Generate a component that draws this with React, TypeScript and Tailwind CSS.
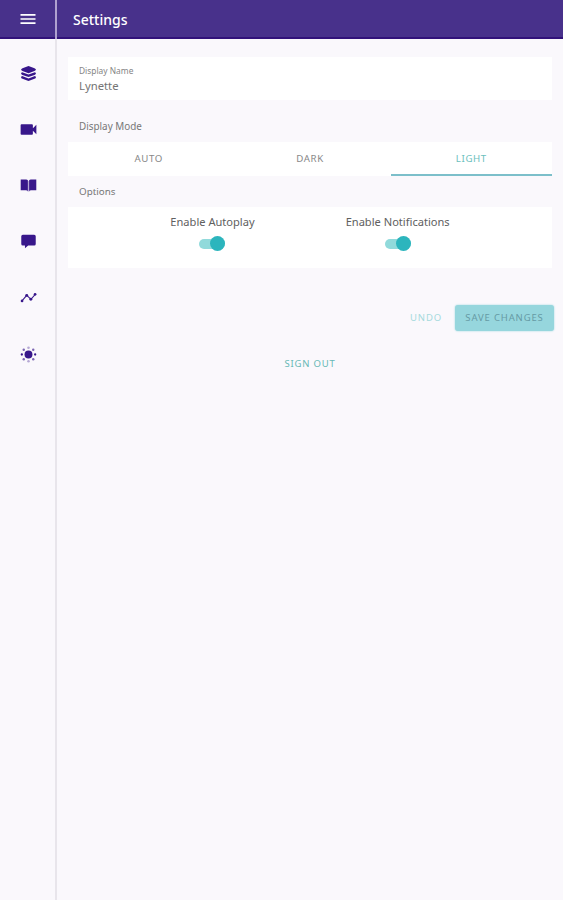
import { useState } from "react";
import type { ReactNode } from "react";
import { MdMenu, MdVideocam } from "react-icons/md";

function Icon({ children }: { children: ReactNode }) {
  return (
    <svg viewBox="0 0 24 24" className="h-[17px] w-[17px]" fill="currentColor">
      {children}
    </svg>
  );
}

const NAV_ITEMS: { label: string; icon: ReactNode }[] = [
  {
    label: "Courses",
    icon: (
      <Icon>
        <path d="M12 1.500 20.500 4.500Q22.500 5.500 22.500 6.500T20.500 8.500L12 11.500 3.500 8.500Q1.500 7.500 1.500 6.500T3.500 4.500z" />
        <path d="M3 10.200l9 3.200 9-3.200q1.500.8 1.500 1.800t-2 2L12 17l-8.500-3q-2-1-2-2t1.500-1.800z" />
        <path d="M3 15.700l9 3.200 9-3.200q1.500.8 1.500 1.800t-2 2L12 22.500l-8.500-3q-2-1-2-2t1.500-1.800z" />
      </Icon>
    ),
  },
  { label: "Videos", icon: <MdVideocam className="h-[21px] w-[21px]" /> },
  {
    label: "Library",
    icon: (
      <Icon>
        <path d="M1 3.500h7.500c1.300 0 2.200.5 2.600 1.200v15c-.7-.6-1.600-.9-2.600-.9H1z" />
        <path d="M23 3.500h-7.500c-1.300 0-2.200.5-2.600 1.200v15c.7-.6 1.600-.9 2.600-.9H23z" />
        <path d="M10.500 5.500h3v15h-3z" opacity="0.350" />
      </Icon>
    ),
  },
  {
    label: "Messages",
    icon: (
      <Icon>
        <path d="M4 2.500h16a2.200 2.200 0 0 1 2.200 2.200v10.800a2.200 2.200 0 0 1-2.200 2.200h-8.500l-4.500 4v-4H4a2.200 2.200 0 0 1-2.200-2.200V4.700A2.200 2.200 0 0 1 4 2.500z" />
      </Icon>
    ),
  },
  {
    label: "Progress",
    icon: (
      <Icon>
        <path d="M2.500 17 9.500 9l6 5.500L21.500 7.500" fill="none" stroke="currentColor" strokeWidth="1.500" />
        <circle cx="2.900" cy="16.800" r="1.900" />
        <circle cx="9.500" cy="9" r="2.100" />
        <circle cx="15.300" cy="14.500" r="2.100" />
        <circle cx="21.300" cy="7.500" r="1.900" />
      </Icon>
    ),
  },
  {
    label: "Theme",
    icon: (
      <Icon>
        <circle cx="12" cy="12" r="5.600" />
        <circle cx="2.600" cy="12" r="1.600" />
        <circle cx="21.400" cy="12" r="1.600" />
        <g opacity="0.650">
          <circle cx="5.300" cy="5.300" r="1.700" />
          <circle cx="18.700" cy="5.300" r="1.700" />
          <circle cx="5.300" cy="18.700" r="1.700" />
          <circle cx="18.700" cy="18.700" r="1.700" />
        </g>
        <g opacity="0.350">
          <circle cx="12" cy="2.500" r="1.800" />
          <circle cx="12" cy="21.500" r="1.800" />
        </g>
      </Icon>
    ),
  },
];

const MODES = ["AUTO", "DARK", "LIGHT"];

function Toggle({ label }: { label: string }) {
  const [on, setOn] = useState(true);

  return (
    <div className="flex flex-col items-center">
      <span className="text-[11.100px] leading-4 text-[#606060]">{label}</span>
      <button
        role="switch"
        aria-checked={on}
        aria-label={label}
        onClick={() => setOn(!on)}
        className={`mt-[6px] flex h-[15px] w-[26px] items-center ${on ? "justify-end" : "justify-start"}`}
      >
        <span className="flex h-[10px] w-[26px] items-center justify-end rounded-full bg-[#91dadb]">
          <span className="h-[15px] w-[15px] shrink-0 rounded-full bg-[#2cb5bd]" />
        </span>
      </button>
    </div>
  );
}

export default function App() {
  const [mode, setMode] = useState("LIGHT");

  return (
    <div className="flex h-[900px] w-full bg-[#faf8fc] font-['Noto_Sans','Open_Sans',sans-serif]">
      {/* Sidebar */}
      <aside className="flex w-[55px] shrink-0 flex-col">
        <div className="flex h-[39px] items-center justify-center border-b-2 border-[#32127a] bg-[#48318b] pt-px pl-px text-white">
          <MdMenu className="h-[20px] w-[20px]" />
        </div>
        <nav className="flex flex-col items-center pt-[6px] pl-[2px] text-[#38178b]">
          {NAV_ITEMS.map((item) => (
            <a key={item.label} aria-label={item.label} className="flex h-[56.200px] items-center">
              {item.icon}
            </a>
          ))}
        </nav>
      </aside>

      <div className="w-[2px] shrink-0 bg-[#e8e5eb]">
        <div className="h-[39px] bg-[#b0a1d0]" />
      </div>

      <div className="min-w-0 flex-1">
        {/* Header */}
        <header className="flex h-[39px] items-center border-b-2 border-[#32127a] bg-[#48318b] pt-[2px] pl-4">
          <h1 className="text-[14px] font-medium text-white">Settings</h1>
        </header>

        <main className="pt-[18px] pr-[11px] pl-[11px]">
          <div className="h-[43px] bg-white pt-[7px] pl-[11px]">
            <div className="text-[8.400px] leading-[14px] text-[#858585]">Display Name</div>
            <div className="text-[11.300px] leading-4 text-[#747474]">Lynette</div>
          </div>

          <div className="flex h-[42px] items-center pt-[11px] pl-[11px] text-[9.900px] text-[#777]">
            Display Mode
          </div>
          <div className="grid h-[34px] grid-cols-3 bg-white">
            {MODES.map((m) => (
              <button
                key={m}
                onClick={() => setMode(m)}
                className={`border-b-2 pt-[3px] text-[9.700px] tracking-[0.600px] ${
                  m === mode ? "border-[#7cbfca] text-[#6bc0bd]" : "border-transparent text-[#888]"
                }`}
              >
                {m}
              </button>
            ))}
          </div>

          <div className="flex h-[31px] items-center pt-px pl-[11px] text-[9.800px] text-[#777]">Options</div>
          <div className="flex h-[61px] justify-center gap-[91px] bg-white pt-[7px]">
            <Toggle label="Enable Autoplay" />
            <Toggle label="Enable Notifications" />
          </div>

          {/* Actions */}
          <div className="mt-[37px] -mr-[2px] flex items-center justify-end gap-[13px] text-[9.500px] tracking-[0.850px]">
            <button className="text-[#a5dadc]">UNDO</button>
            <button className="h-[26px] w-[99px] rounded-[3px] bg-[#96d6dd] text-[#669ba5] shadow-[0_0_2px_#96d6dd]">
              SAVE CHANGES
            </button>
          </div>
          <div className="mt-[25px] flex justify-center">
            <button className="text-[9.500px] leading-4 tracking-[0.800px] text-[#68b9b6]">SIGN OUT</button>
          </div>
        </main>
      </div>
    </div>
  );
}
